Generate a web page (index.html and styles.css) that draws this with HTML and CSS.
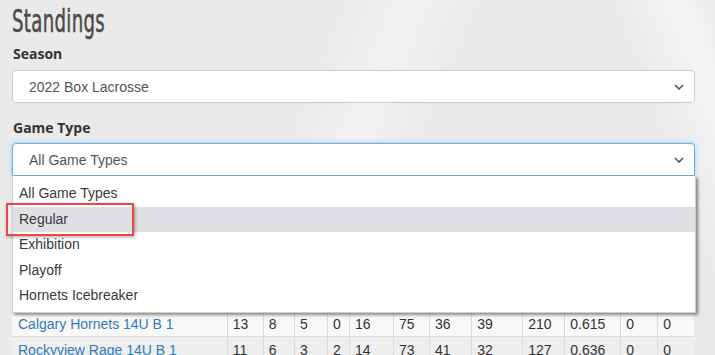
FILE: index.html
```html
<!DOCTYPE html>
<html lang="en">
<head>
    <meta charset="UTF-8">
    <title>Standings</title>
    <link rel="stylesheet" href="styles.css">
</head>
<body>
    <div class="page">
        <h1 class="title"><span>Standings</span></h1>

        <div class="form-group">
            <label class="label">Season</label>
            <div class="select">
                <span>2022 Box Lacrosse</span>
                <svg class="caret" width="10" height="6" viewBox="0 0 10 6"><path d="M1 1l4 4 4-4" fill="none" stroke="#555" stroke-width="1.6"/></svg>
            </div>
        </div>

        <div class="form-group">
            <label class="label">Game Type</label>
            <div class="select-wrap">
                <div class="select open">
                    <span>All Game Types</span>
                    <svg class="caret" width="10" height="6" viewBox="0 0 10 6"><path d="M1 1l4 4 4-4" fill="none" stroke="#555" stroke-width="1.6"/></svg>
                </div>
                <ul class="options">
                    <li>All Game Types</li>
                    <li class="hover"><span class="callout">Regular</span></li>
                    <li>Exhibition</li>
                    <li>Playoff</li>
                    <li>Hornets Icebreaker</li>
                </ul>
            </div>
        </div>

        <table class="standings">
            <colgroup>
                <col style="width:215px"><col style="width:36px"><col style="width:31px"><col style="width:33px">
                <col style="width:22px"><col style="width:44px"><col style="width:36px"><col style="width:42px">
                <col style="width:51px"><col style="width:42px"><col style="width:56px"><col style="width:37px"><col style="width:36px">
            </colgroup>
            <thead>
                <tr><th>Team</th><th>GP</th><th>W</th><th>L</th><th>T</th><th>PTS</th><th>GF</th><th>GA</th><th>+/-</th><th>PIM</th><th>PCT</th><th>OTW</th><th>OTL</th></tr>
            </thead>
            <tbody>
                <tr><td><a href="#">Calgary Hornets 14U B 1</a></td><td>13</td><td>8</td><td>5</td><td>0</td><td>16</td><td>75</td><td>36</td><td>39</td><td>210</td><td>0.615</td><td>0</td><td>0</td></tr>
                <tr><td><a href="#">Rockyview Rage 14U B 1</a></td><td>11</td><td>6</td><td>3</td><td>2</td><td>14</td><td>73</td><td>41</td><td>32</td><td>127</td><td>0.636</td><td>0</td><td>0</td></tr>
            </tbody>
        </table>
    </div>
</body>
</html>
```

FILE: styles.css
```css
html, body {
    margin: 0;
    padding: 0;
    height: 100%;
    overflow: hidden;
}
body {
    font-family: "Liberation Sans", Arial, sans-serif;
    font-size: 14px;
    color: #333;
    background-color: #eaeaea;
    background-image:
        linear-gradient(112deg, rgba(255,255,255,0) 40%, rgba(255,255,255,0.35) 48%, rgba(255,255,255,0) 56%),
        linear-gradient(70deg, rgba(255,255,255,0) 88%, rgba(255,255,255,0.5) 96%, rgba(255,255,255,0) 100%);
}
.page {
    width: 683px;
    margin-left: 12px;
}
.title {
    font-family: "DejaVu Sans", sans-serif;
    font-stretch: condensed;
    font-weight: normal;
    font-size: 32px;
    line-height: 36px;
    color: #4a4a4a;
    margin: 3px 0 5px;
    height: 36px;
}
.title span {
    display: inline-block;
    transform: scaleX(0.63);
    transform-origin: left center;
    letter-spacing: 0.5px;
    -webkit-text-stroke: 0.5px #4a4a4a;
}
.form-group {
    margin-bottom: 15px;
}
.label {
    display: block;
    font-family: "Open Sans", sans-serif;
    font-weight: 700;
    font-size: 14px;
    line-height: 20px;
    color: #333;
    margin-bottom: 6px;
    padding-left: 1px;
}
.form-group + .form-group .label {
    margin-bottom: 5px;
}
.select {
    height: 33px;
    box-sizing: border-box;
    background: #fff;
    border: 1px solid #ccc;
    border-radius: 4px;
    padding: 0 10px 0 16px;
    display: flex;
    align-items: center;
    justify-content: space-between;
    color: #555;
}
.caret {
    display: block;
}
.select-wrap {
    position: relative;
}
.select.open {
    border-color: #66afe9;
    border-radius: 4px 4px 0 0;
    box-shadow: 0 0 4px rgba(102, 175, 233, 0.6);
}
.options {
    position: absolute;
    top: 33px;
    left: 0;
    right: -1px;
    margin: 0;
    padding: 5px 0 3px;
    list-style: none;
    background: #fff;
    border: 1px solid #d0d0d0;
    border-top: none;
    box-shadow: 2px 2px 3px rgba(0, 0, 0, 0.45);
    z-index: 2;
}
.options li {
    height: 25.5px;
    line-height: 25.5px;
    padding-left: 6px;
    color: #3a3a3a;
}
.options li.hover {
    background: #dfe0e4;
}
.callout {
    display: inline-block;
    position: relative;
}
.callout::after {
    content: "";
    position: absolute;
    left: -13px;
    top: -4px;
    width: 124px;
    height: 29px;
    border: 2.5px solid #ec4747;
    box-shadow: 1px 1px 3px rgba(0, 0, 0, 0.35);
}
.standings {
    border-collapse: collapse;
    table-layout: fixed;
    width: 682px;
    margin-top: 108px;
}
.standings th,
.standings td {
    height: 25px;
    padding: 0 5px;
    text-align: left;
    font-weight: normal;
    border-left: 1px solid #dcdcdc;
    border-top: 1px solid #dcdcdc;
    white-space: nowrap;
    color: #333;
}
.standings td:first-child,
.standings th:first-child {
    border-left: none;
    padding-left: 6px;
}
.standings tbody tr:nth-child(odd) {
    background: #f8f8f8;
}
.standings tbody tr:nth-child(even) {
    background: #eeeeee;
}
.standings a {
    color: #337ab7;
    text-decoration: none;
}
```
